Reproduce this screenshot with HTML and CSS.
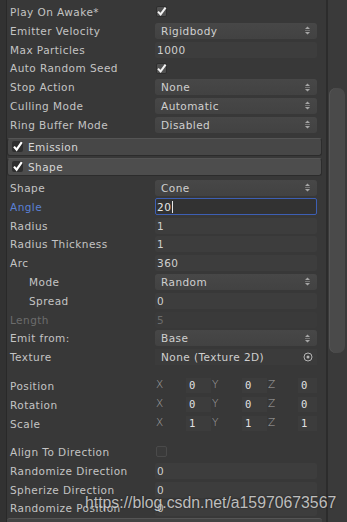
FILE: index.html
```html
<!DOCTYPE html>
<html>
<head>
<meta charset="utf-8">
<link rel="stylesheet" href="styles.css">
</head>
<body>
<div class="app">
  <div class="strip"></div>
  <div class="main">
    <div class="sec sec-top">
      <div class="row"><span class="label">Play On Awake*</span><span class="check"><svg viewBox="0 0 11 11" width="11" height="11"><path d="M2 5.6 L4.6 8.4 L9.6 1.6" fill="none" stroke="#f2f2f2" stroke-width="2"/></svg></span></div>
      <div class="row"><span class="label">Emitter Velocity</span><span class="field drop">Rigidbody<svg class="arr" viewBox="0 0 7 9" width="7" height="9"><path d="M3.5 0.5 L6 3 L1 3Z M1 4.2 H6 V4.8 H1Z M1 6 L6 6 L3.5 8.5Z" fill="#a6a6a6"/></svg></span></div>
      <div class="row"><span class="label">Max Particles</span><span class="field num">1000</span></div>
      <div class="row"><span class="label">Auto Random Seed</span><span class="check"><svg viewBox="0 0 11 11" width="11" height="11"><path d="M2 5.6 L4.6 8.4 L9.6 1.6" fill="none" stroke="#f2f2f2" stroke-width="2"/></svg></span></div>
      <div class="row"><span class="label">Stop Action</span><span class="field drop">None<svg class="arr" viewBox="0 0 7 9" width="7" height="9"><path d="M3.5 0.5 L6 3 L1 3Z M1 4.2 H6 V4.8 H1Z M1 6 L6 6 L3.5 8.5Z" fill="#a6a6a6"/></svg></span></div>
      <div class="row"><span class="label">Culling Mode</span><span class="field drop">Automatic<svg class="arr" viewBox="0 0 7 9" width="7" height="9"><path d="M3.5 0.5 L6 3 L1 3Z M1 4.2 H6 V4.8 H1Z M1 6 L6 6 L3.5 8.5Z" fill="#a6a6a6"/></svg></span></div>
      <div class="row"><span class="label">Ring Buffer Mode</span><span class="field drop">Disabled<svg class="arr" viewBox="0 0 7 9" width="7" height="9"><path d="M3.5 0.5 L6 3 L1 3Z M1 4.2 H6 V4.8 H1Z M1 6 L6 6 L3.5 8.5Z" fill="#a6a6a6"/></svg></span></div>
    </div>

    <div class="header header-emission"><span class="hcheck"><svg viewBox="0 0 11 11" width="11" height="11"><path d="M2 5.6 L4.6 8.6 L9.8 1.2" fill="none" stroke="#ffffff" stroke-width="2.2"/></svg></span><span class="htitle">Emission</span></div>
    <div class="header header-shape"><span class="hcheck"><svg viewBox="0 0 11 11" width="11" height="11"><path d="M2 5.6 L4.6 8.6 L9.8 1.2" fill="none" stroke="#ffffff" stroke-width="2.2"/></svg></span><span class="htitle">Shape</span></div>

    <div class="sec sec-shape">
      <div class="row"><span class="label">Shape</span><span class="field drop">Cone<svg class="arr" viewBox="0 0 7 9" width="7" height="9"><path d="M3.5 0.5 L6 3 L1 3Z M1 4.2 H6 V4.8 H1Z M1 6 L6 6 L3.5 8.5Z" fill="#a6a6a6"/></svg></span></div>
      <div class="row"><span class="label label-focus">Angle</span><span class="field focus">20<span class="caret"></span></span></div>
      <div class="row"><span class="label">Radius</span><span class="field num">1</span></div>
      <div class="row"><span class="label">Radius Thickness</span><span class="field num">1</span></div>
      <div class="row"><span class="label">Arc</span><span class="field num">360</span></div>
      <div class="row"><span class="label label-sub">Mode</span><span class="field drop">Random<svg class="arr" viewBox="0 0 7 9" width="7" height="9"><path d="M3.5 0.5 L6 3 L1 3Z M1 4.2 H6 V4.8 H1Z M1 6 L6 6 L3.5 8.5Z" fill="#a6a6a6"/></svg></span></div>
      <div class="row"><span class="label label-sub">Spread</span><span class="field num">0</span></div>
      <div class="row"><span class="label label-dis">Length</span><span class="field num dis">5</span></div>
      <div class="row"><span class="label">Emit from:</span><span class="field drop">Base<svg class="arr" viewBox="0 0 7 9" width="7" height="9"><path d="M3.5 0.5 L6 3 L1 3Z M1 4.2 H6 V4.8 H1Z M1 6 L6 6 L3.5 8.5Z" fill="#a6a6a6"/></svg></span></div>
      <div class="row"><span class="label">Texture</span><span class="field obj">None (Texture 2D)<svg class="pick" viewBox="0 0 10 10" width="10" height="10"><circle cx="5" cy="5" r="4" fill="none" stroke="#b4b4b4" stroke-width="1"/><circle cx="5" cy="5" r="1.5" fill="#b4b4b4"/></svg></span></div>
    </div>

    <div class="sec sec-gap">
      <div class="row"><span class="label">Position</span><span class="vec"><span class="comp"><span class="axis">X</span><span class="vf">0</span></span><span class="comp"><span class="axis">Y</span><span class="vf">0</span></span><span class="comp comp-last"><span class="axis">Z</span><span class="vf">0</span></span></span></div>
      <div class="row"><span class="label">Rotation</span><span class="vec"><span class="comp"><span class="axis">X</span><span class="vf">0</span></span><span class="comp"><span class="axis">Y</span><span class="vf">0</span></span><span class="comp comp-last"><span class="axis">Z</span><span class="vf">0</span></span></span></div>
      <div class="row"><span class="label">Scale</span><span class="vec"><span class="comp"><span class="axis">X</span><span class="vf">1</span></span><span class="comp"><span class="axis">Y</span><span class="vf">1</span></span><span class="comp comp-last"><span class="axis">Z</span><span class="vf">1</span></span></span></div>
    </div>

    <div class="sec sec-gap2">
      <div class="row"><span class="label">Align To Direction</span><span class="check empty"></span></div>
      <div class="row"><span class="label">Randomize Direction</span><span class="field num">0</span></div>
      <div class="row"><span class="label">Spherize Direction</span><span class="field num">0</span></div>
      <div class="row"><span class="label">Randomize Position</span><span class="field num">0</span></div>
    </div>
    <div class="next-header"></div>
  </div>
  <div class="gutter"><div class="thumb"></div></div>
  <div class="watermark">https://blog.csdn.net/a15970673567</div>
</div>
</body>
</html>
```

FILE: styles.css
```css
html, body {
  margin: 0;
  padding: 0;
  background: #383838;
  overflow: hidden;
}
.app {
  position: relative;
  display: flex;
  width: 347px;
  height: 522px;
  overflow: hidden;
  font-family: "DejaVu Sans", Verdana, sans-serif;
  font-size: 10.5px;
  letter-spacing: 0.45px;
  color: #c4c4c4;
}
.strip {
  width: 6px;
  flex: none;
  background: #323232;
  border-right: 1px solid #292929;
}
.main {
  width: 315px;
  flex: none;
  display: flex;
  flex-direction: column;
}
.main > * { flex: none; }
.sec-top { padding-top: 2.6px; }
.sec-shape { margin-top: 2.6px; }
.sec-gap { margin-top: 10px; }
.sec-gap2 { margin-top: 9.6px; }
.row {
  display: flex;
  align-items: center;
  height: 18.8px;
  padding-left: 3px;
}
.label {
  width: 145px;
  flex: none;
  white-space: nowrap;
}
.label-sub { padding-left: 19px; width: 126px; }
.label-focus { color: #5a80d6; }
.label-dis { color: #6c6c6c; }
.field {
  width: 162px;
  height: 16px;
  box-sizing: border-box;
  display: flex;
  align-items: center;
  white-space: nowrap;
  color: #d0d0d0;
}
.num {
  padding-left: 2px;
  background: #3d3d3d;
  border-radius: 2px;
}
.num.dis { color: #6c6c6c; background: #3a3a3a; }
.drop {
  padding-left: 6px;
  padding-right: 6px;
  background: linear-gradient(#474747, #424242);
  border-radius: 3px;
  justify-content: space-between;
}
.obj {
  padding-left: 6px;
  padding-right: 4px;
  background: #3b3b3b;
  justify-content: space-between;
}
.focus {
  height: 17px;
  padding-left: 1px;
  background: #323232;
  border: 1px solid #3d5fb4;
  border-radius: 2px;
  color: #e6e6e6;
}
.caret {
  width: 1px;
  height: 12px;
  margin-left: 1px;
  background: #e6e6e6;
}
.check {
  width: 11px;
  height: 11px;
  margin-left: 1px;
  box-sizing: border-box;
  background: #505050;
  border: 1px solid #2e2e2e;
  border-radius: 2px;
  display: flex;
}
.check svg { margin: -1px; }
.check.empty {
  background: #3a3a3a;
  border: 1px solid #4a4a4a;
}
.header {
  height: 18px;
  box-sizing: border-box;
  display: flex;
  align-items: center;
  border-radius: 3px;
  background: #4a4a4a;
  border: 1px solid #2c2c2c;
  border-top-color: #555;
  color: #d6d6d6;
}
.header-emission { margin-top: 3.8px; background: #474747; }
.header-shape { margin-top: 2px; background: #4d4d4d; }
.hcheck {
  width: 11px;
  height: 11px;
  margin-left: 4px;
  background: #2e2e2e;
  border-radius: 2px;
  display: flex;
}
.htitle { margin-left: 5px; }
.vec {
  display: flex;
  width: 162px;
  color: #e2e2e2;
}
.comp {
  display: flex;
  width: 56px;
}
.comp-last { width: 50px; }
.axis {
  width: 30px;
  padding-left: 1px;
  color: #a4a4a4;
  font-weight: 300;
}
.vf {
  flex: 1;
  height: 15px;
  line-height: 15px;
  padding-left: 3px;
  background: #3c3c3c;
  font-family: "DejaVu Sans Mono", monospace;
  letter-spacing: 0;
}
.next-header {
  margin-top: 0.4px;
  height: 8px;
  background: #434343;
  border-top: 1px solid #555;
  border-radius: 3px 3px 0 0;
}
.gutter {
  flex: 1;
  position: relative;
  background: #3a3a3a;
  border-left: 4px solid #383838;
  box-shadow: inset 2px 0 0 #2c2c2c;
}
.thumb {
  position: absolute;
  left: 3px;
  right: 2px;
  top: 88px;
  height: 265px;
  background: #4a4a4a;
  border-radius: 7px;
  box-shadow: inset 1px 0 0 #555;
}
.watermark {
  position: absolute;
  left: 85px;
  top: 494px;
  font-family: "Liberation Sans", Arial, sans-serif;
  font-size: 15.8px;
  letter-spacing: 0;
  color: rgba(225, 225, 225, 0.82);
  text-shadow: 0 0 2px rgba(0, 0, 0, 0.6);
  white-space: nowrap;
}
```
